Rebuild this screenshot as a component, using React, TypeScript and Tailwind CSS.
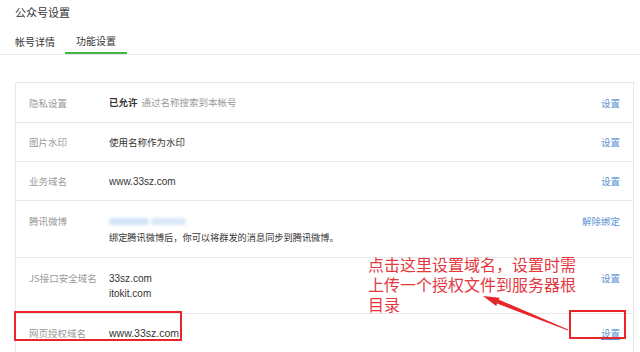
import React from 'react';

const cjk = { fontFamily: '"Noto Sans CJK SC", "Liberation Sans", sans-serif' };

interface RowProps {
  label: string;
  action?: string;
  underline?: boolean;
  top?: boolean;
  children: React.ReactNode;
}

const Row = ({ label, action = '设置', underline, top, children }: RowProps) => (
  <div
    className={`flex border-t border-[#e7e7eb] first:border-t-0 px-[13px] ${
      top ? 'items-start py-[12px]' : 'h-[39px] items-center'
    }`}
  >
    <div className="w-[80px] shrink-0 text-[9.5px] leading-[16px] text-[#999]">{label}</div>
    <div className="flex-1 text-[9.5px] leading-[15px] text-[#353535]">{children}</div>
    <div
      className={`text-[9.5px] leading-[16px] text-[#5b93d3] ${underline ? 'underline underline-offset-2' : ''}`}
    >
      {action}
    </div>
  </div>
);

export default function App() {
  return (
    <div className="relative h-[352px] w-[640px] overflow-hidden bg-white" style={cjk}>
      <div className="h-[20px] px-[15px] pt-[4px] text-[11px] leading-[16px] text-[#353535]">
        公众号设置
      </div>
      <div className="flex h-[35px] border-b border-[#e7e7eb] pl-[15px] text-[10px] text-[#353535]">
        <div className="flex items-center pt-2">帐号详情</div>
        <div className="ml-[10px] flex items-center border-b-2 border-[#44b549] px-[11px] pt-2">
          功能设置
        </div>
      </div>

      <div className="ml-[15px] mr-[6px] mt-[27px] border border-[#e7e7eb]">
        <Row label="隐私设置">
          <span className="font-bold">已允许</span>
          <span className="ml-1 text-[#999]">通过名称搜索到本帐号</span>
        </Row>
        <Row label="图片水印">使用名称作为水印</Row>
        <Row label="业务域名">
          <span className="font-['Liberation_Sans'] text-[10px]">www.33sz.com</span>
        </Row>
        <Row label="腾讯微博" action="解除绑定" top>
          <div className="flex h-[16px] items-center">
            <div className="flex h-[7px] w-[77px] gap-[2px] blur-[1.5px]">
              <div className="h-full w-[40px] rounded-full bg-[#d3e3f6]" />
              <div className="h-full w-[35px] rounded-full bg-[#d9e7f8]" />
            </div>
          </div>
          <div className="leading-[16px] text-[9.2px]">
            绑定腾讯微博后，你可以将群发的消息同步到腾讯微博。
          </div>
        </Row>
        <Row label="JS接口安全域名" top>
          <div className="pt-[1px] font-['Liberation_Sans'] text-[10px]">33sz.com</div>
          <div className="font-['Liberation_Sans'] text-[10px]">itokit.com</div>
        </Row>
        <Row label="网页授权域名" underline>
          <span className="font-['Liberation_Sans'] text-[10.5px]">www.33sz.com</span>
        </Row>
      </div>

      {/* annotation overlay */}
      <div className="absolute left-[368px] top-[254px] text-[16px] leading-[20px] text-[#e2393f]">
        <div>点击这里设置域名，设置时需</div>
        <div>上传一个授权文件到服务器根</div>
        <div>目录</div>
      </div>
      <div className="absolute left-[14px] top-[311px] h-[30px] w-[168px] border-2 border-[#e8252b]" />
      <div className="absolute left-[569px] top-[310px] h-[29px] w-[57px] border-2 border-[#e8252b]" />
      <svg className="pointer-events-none absolute left-0 top-0" width="640" height="352">
        <polygon points="568,329.5 568,330.5 497,303.5 498.5,299.5" fill="#e8252b" />
        <polygon points="483,296 499.6,297.8 496.2,306.1" fill="#e8252b" />
      </svg>
    </div>
  );
}
